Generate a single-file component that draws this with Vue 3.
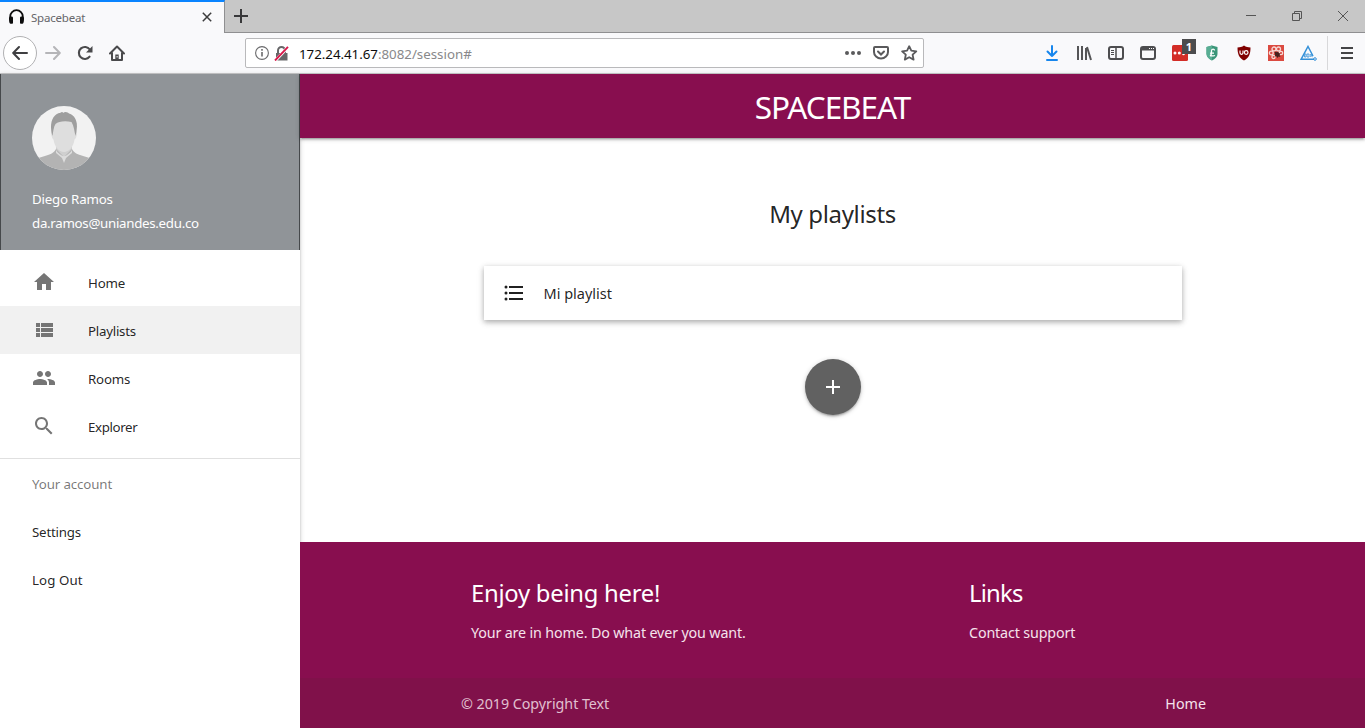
<script setup>
const nav = [
  { label: 'Home', cls: 'n-home', d: 'M10 20v-6h4v6h5v-8h3L12 3 2 12h3v8z' },
  { label: 'Playlists', cls: 'n-play', active: true, d: 'M4 14h4v-4H4v4zm0 5h4v-4H4v4zM4 9h4V5H4v4zm5 5h12v-4H9v4zm0 5h12v-4H9v4zM9 5v4h12V5H9z' },
  { label: 'Rooms', cls: 'n-rooms', d: 'M16 11c1.66 0 2.99-1.34 2.99-3S17.66 5 16 5c-1.66 0-3 1.34-3 3s1.34 3 3 3zm-8 0c1.66 0 2.99-1.34 2.99-3S9.66 5 8 5C6.34 5 5 6.34 5 8s1.34 3 3 3zm0 2c-2.33 0-7 1.17-7 3.5V19h14v-2.5c0-2.33-4.67-3.5-7-3.5zm8 0c-.29 0-.62.02-.97.05 1.16.84 1.97 1.97 1.97 3.45V19h6v-2.5c0-2.33-4.67-3.5-7-3.5z' },
  { label: 'Explorer', cls: 'n-exp', d: 'M15.5 14h-.79l-.28-.27C15.41 12.59 16 11.11 16 9.5 16 5.91 13.09 3 9.5 3S3 5.91 3 9.5 5.91 16 9.5 16c1.61 0 3.09-.59 4.23-1.57l.27.28v.79l5 4.99L20.49 19l-4.99-5zm-6 0C7.01 14 5 11.99 5 9.5S7.01 5 9.5 5 14 7.01 14 9.5 11.99 14 9.5 14z' },
]
</script>

<template>
  <div class="window">
    <div class="tabstrip">
      <div class="tab">
        <svg class="phones" width="17" height="16" viewBox="0 0 17 16"><path d="M2.2 9V7.5a6.3 6.3 0 0 1 12.6 0V9" fill="none" stroke="#0c0c0d" stroke-width="1.8" /><path d="M1 9c0-1.5 4-2.500 4 0v5c0 1-2.500 1-3 .5C1.200 13.500 1 12 1 9zM16 9c0-1.500-4-2.500-4 0v5c0 1 2.500 1 3 .5.800-1 1-2.500 1-5.500z" fill="#0c0c0d" /></svg>
        <span class="tab-title">Spacebeat</span>
        <svg class="tab-close" width="10" height="10" viewBox="0 0 10 10"><path d="M.8.8l8.400 8.400M9.200.8L.8 9.200" stroke="#3c3c3d" stroke-width="1.500" /></svg>
      </div>
      <svg class="plus" width="14" height="14" viewBox="0 0 14 14"><path d="M7 0v14M0 7h14" stroke="#38383a" stroke-width="2" /></svg>
      <div class="winbtns">
        <svg width="10" height="10" viewBox="0 0 10 10"><path d="M0 4.500h10" stroke="#555" /></svg>
        <svg width="10" height="10" viewBox="0 0 10 10" fill="none" stroke="#555"><path d="M.5 2.500h7v7h-7zM2.500 2.500v-2h7v7h-2" /></svg>
        <svg width="10" height="10" viewBox="0 0 10 10"><path d="M0 0l10 10M10 0L0 10" stroke="#555" /></svg>
      </div>
    </div>

    <div class="toolbar">
      <div class="back"><svg width="16" height="16" viewBox="0 0 16 16" fill="none" stroke="#3f3f41" stroke-width="2" stroke-linecap="round" stroke-linejoin="round"><path d="M15 8H1.500M7 2L1.200 8 7 14" /></svg></div>
      <svg class="fwd" width="16" height="16" viewBox="0 0 16 16" fill="none" stroke="#b5b5b8" stroke-width="2" stroke-linecap="round" stroke-linejoin="round"><path d="M1 8h13.500M9 2l5.800 6L9 14" /></svg>
      <svg class="reload" width="16" height="16" viewBox="0 0 16 16"><path d="M12.600 11.700A6 6 0 1 1 12.800 4.500" fill="none" stroke="#4a4a4c" stroke-width="2.100" stroke-linecap="round" /><path d="M15.500 1v6.500H9z" fill="#4a4a4c" /></svg>
      <svg class="homei" width="16" height="16" viewBox="0 0 16 16"><path d="M1 8.500L8 1.500l7 7M3 7.500V15h10V7.500" fill="none" stroke="#4a4a4c" stroke-width="2" stroke-linecap="round" stroke-linejoin="round" /><path d="M6.300 15V9.500h3.400V15z" fill="#4a4a4c" /><path d="M7.600 11h1v1.500h-1z" fill="#f9f9fa" /></svg>
      <div class="urlbar">
        <svg width="14" height="14" viewBox="0 0 14 14"><circle cx="7" cy="7" r="6.400" fill="none" stroke="#6a6a6c" stroke-width="1.100" /><path d="M7 6v4.500M7 3v1.700" stroke="#6a6a6c" stroke-width="1.600" /></svg>
        <svg class="lock" width="15" height="15" viewBox="0 0 15 15"><path d="M4 8V4.500a3.500 3.500 0 0 1 7 0V8" fill="none" stroke="#666668" stroke-width="2" /><path d="M2 7h11.500v7.500H2z" fill="#666668" /><path d="M1.500 14.500L14 1" stroke="#fff" stroke-width="3" /><path d="M1 14.500L14 .8" stroke="#d7184a" stroke-width="1.900" /></svg>
        <span class="url"><b>172.24.41.67</b>:8082/session#</span>
        <svg class="pageacts" width="74" height="18" viewBox="0 0 74 18" fill="none" stroke="#5a5a5c" stroke-width="2">
          <g fill="#5a5a5c" stroke="none"><circle cx="3" cy="9" r="2" /><circle cx="9" cy="9" r="2" /><circle cx="15" cy="9" r="2" /></g>
          <path d="M31 3h12a1 1 0 0 1 1 1v4a7 6.500 0 0 1-14 0V4a1 1 0 0 1 1-1z" /><path d="M34 7.500l3 3 3-3" stroke-linecap="round" />
          <path d="M65.200 2.200l2.100 4.500 5 .6-3.700 3.400 1 4.900-4.400-2.400-4.400 2.400 1-4.900-3.700-3.400 5-.6z" stroke-width="1.800" stroke-linejoin="round" />
        </svg>
      </div>
      <div class="actions">
        <svg width="16" height="18" viewBox="0 0 16 18" fill="none" stroke="#1786ed" stroke-width="2"><path d="M8 2v10M3.500 7.500L8 12l4.500-4.500M3 16h10" stroke-linecap="round" stroke-linejoin="round" /></svg>
        <svg width="16" height="16" viewBox="0 0 16 16" stroke="#555557" stroke-width="2"><path d="M2 1v14M6 1v14M10 3v12M11 2l4 13" /></svg>
        <svg width="16" height="14" viewBox="0 0 16 14" fill="none" stroke="#4d4d4f"><rect x="1" y="1" width="14" height="12" rx="2" stroke-width="2" /><path d="M8 1v12" stroke-width="1.500" /><path d="M3 4.500h3M3 6.500h3M3 8.500h3" /></svg>
        <svg width="16" height="14" viewBox="0 0 16 14" fill="none" stroke="#4d4d4f"><rect x="1" y="1" width="14" height="12" rx="2" stroke-width="2" /><path d="M1 3h14" stroke-width="3" /><path d="M9 2.500h1m1 0h1m1 0h1" stroke="#fff" /></svg>
        <div class="lp"><svg width="16" height="16" viewBox="0 0 16 16"><rect width="16" height="16" rx="1.500" fill="#d32d27" /><circle cx="3" cy="8" r="1.500" fill="#fff" /><circle cx="7.300" cy="8" r="1.500" fill="#fff" /><circle cx="11.500" cy="9" r="1.300" fill="#fff" /></svg><span class="count">1</span></div>
        <svg width="16" height="16" viewBox="0 0 16 16"><path d="M8 .5L13.500 2v7c0 3-2.500 5-5.500 6.500C5 14 2.500 12 2.500 9V2z" fill="#3b9679" /><path d="M8 .5V15.500C5 14 2.500 12 2.500 9V2z" fill="#58ad93" /><path d="M10.500 5.500c0-2-3-2-3 .5 0 2 .5 4-1.500 5 2-.8 3 .5 5-.5M6 8.200h4" fill="none" stroke="#fff" stroke-width="1.300" /></svg>
        <svg width="16" height="16" viewBox="0 0 16 16"><path d="M8 .5c2 1.500 4 1.800 6.500 2C14.500 9 13 13 8 15.500 3 13 1.500 9 1.500 2.500 4 2.300 6 2 8 .5z" fill="#800000" /><path d="M4 5.500v2.300a1.500 1.500 0 0 0 3 0V5.500" fill="none" stroke="#fff" stroke-width="1.200" /><circle cx="10.200" cy="7.500" r="1.800" fill="none" stroke="#fff" stroke-width="1.200" /></svg>
        <svg width="16" height="16" viewBox="0 0 16 16"><rect width="16" height="16" fill="#db4a40" /><g fill="none" stroke="#f6d9d5" stroke-width="1.300"><circle cx="6" cy="4" r="2" /><circle cx="10.500" cy="4" r="2" /><circle cx="13" cy="8" r="1.700" /><circle cx="3.300" cy="8" r="1.900" /><circle cx="5.500" cy="12" r="1.600" /></g><path d="M6.500 6.500l2.500.8 1-.8.8 1.600 1.700.4-1 1.500 1 2-2-.5-1 1.500-1-1.700-2 .3.700-1.600z" fill="#45201c" /></svg>
        <svg width="17" height="16" viewBox="0 0 17 16" fill="none" stroke="#3490d8"><path d="M14 14.200H1.200L8 1.500l5 9.500" stroke-width="1.500" /><circle cx="15" cy="14" r="1.300" /><path d="M4.500 12V9.500L6 8.800v3.200H4.500M7 9h2v3H7zM10 9l2.500 3.200M12 9l-2 3" stroke-width=".8" /></svg>
      </div>
      <div class="menu"><svg width="12" height="12" viewBox="0 0 12 12"><path d="M0 1h12M0 6h12M0 11h12" stroke="#454547" stroke-width="2" /></svg></div>
    </div>

    <div class="page">
      <aside class="side">
        <div class="user">
          <svg class="avatar" width="64" height="64" viewBox="0 0 64 64">
            <defs><clipPath id="face"><circle cx="32" cy="32" r="32" /></clipPath></defs>
            <g clip-path="url(#face)">
              <rect width="64" height="64" fill="#f2f2f2" />
              <path d="M24 40h16v10H24z" fill="#cfcfcf" />
              <path d="M0 55c5-3 11-4.500 16-6 4-1.200 6-2.500 8-6l8 8 8-8c2 3.500 4 4.800 8 6 5 1.500 11 3 16 6v9H0z" fill="#b3b3b3" />
              <path d="M24 44c2 3 5 5.500 8 6.500 3-1 6-3.500 8-6.500v3l-6 5-2 5-2-5-6-5z" fill="#dcdcdc" />
              <path d="M20 24c-2 1-.5 8 1.500 9.500C22.500 41 27 46 32 46s9.500-5 10.500-12.500C45 32 46 25 44 24 44 14 39 12 32 12s-12 2-12 12z" fill="#dedede" />
              <path d="M20.500 30C18 22 18.500 14 23 9.500c2-2 4-2.500 5-2.500 2-1.500 3-1 3 0 2-2 5-1 6 .5 4 1 7 4.500 7.800 10 .5 4-.3 8-1.300 12.500-1-4-1.500-10-4-14-7-1.500-13-.5-16 2-2 3-2.300 8-3 12z" fill="#9e9e9e" />
            </g>
          </svg>
          <span class="name">Diego Ramos</span>
          <span class="mail">da.ramos@uniandes.edu.co</span>
        </div>
        <ul class="nav">
          <li v-for="n in nav" :key="n.label" :class="{ active: n.active }">
            <svg width="24" height="24" viewBox="0 0 24 24"><path :d="n.d" fill="#757575" /></svg>
            <span :class="n.cls">{{ n.label }}</span>
          </li>
        </ul>
        <ul class="account">
          <li class="sub"><span>Your account</span></li>
          <li><span class="settings">Settings</span></li>
          <li><span class="logout">Log Out</span></li>
        </ul>
      </aside>

      <div class="main">
        <header class="brandbar"><span class="brand">SPACEBEAT</span></header>
        <main class="content">
          <h5 class="heading"><span>My playlists</span></h5>
          <div class="card">
            <svg width="24" height="24" viewBox="0 0 24 24" fill="#212121"><circle cx="4" cy="6" r="1.500" /><circle cx="4" cy="12" r="1.500" /><circle cx="4" cy="18" r="1.500" /><path d="M7 5h14v2H7zM7 11h14v2H7zM7 17h14v2H7z" /></svg>
            <span>Mi playlist</span>
          </div>
          <div class="fab"><svg width="24" height="24" viewBox="0 0 24 24"><path d="M19 13h-6v6h-2v-6H5v-2h6V5h2v6h6v2z" fill="#fff" /></svg></div>
        </main>
        <footer class="foot">
          <div class="foot-cols">
            <div class="col-a"><h5><span class="enjoy">Enjoy being here!</span></h5><p><span class="blurb">Your are in home. Do what ever you want.</span></p></div>
            <div class="col-b"><h5><span class="links">Links</span></h5><p><span class="support">Contact support</span></p></div>
          </div>
          <div class="copy"><span class="c">© 2019 Copyright Text</span><span class="h">Home</span></div>
        </footer>
      </div>
    </div>
  </div>
</template>

<style>
body { margin: 0; overflow: hidden; }
</style>

<style scoped>
* { box-sizing: border-box; }
svg { display: block; flex: none; }
span { white-space: nowrap; }
ul, h5, p { margin: 0; padding: 0; list-style: none; font-weight: 400; }
.window { width: 1365px; height: 728px; display: flex; flex-direction: column; background: #fff; font-family: "Noto Sans", "Open Sans", sans-serif; overflow: hidden; }

.tabstrip { height: 33px; display: flex; background: #c7c7c7; border-bottom: 1px solid #8f8f91; flex: none; }
.tab { width: 225px; height: 33px; background: #f9f9fb; border-top: 2px solid #0a84ff; border-right: 1px solid #8f8f91; display: flex; align-items: center; padding: 0 0 1px 8px; }
.tab-title { width: 171px; margin-left: 6px; font-size: 11.5px; letter-spacing: -0.2px; color: #66666a; }
.plus { margin: 9px 0 0 9px; }
.winbtns { margin: 11px 17px 0 auto; display: flex; gap: 36px; }

.toolbar { height: 41px; display: flex; align-items: center; background: #f9f9fb; border-bottom: 1px solid #c9c9cb; flex: none; }
.back { width: 34px; height: 34px; margin-left: 3px; border: 1px solid #b1b1b3; border-radius: 50%; background: #fff; display: flex; align-items: center; justify-content: center; }
.fwd { margin-left: 8px; }
.reload, .homei { margin-left: 16px; }
.urlbar { width: 679px; height: 30px; margin-left: 120px; padding: 0 5px 0 9px; border: 1px solid #b9b9bb; border-radius: 2px; background: #fff; display: flex; align-items: center; }
.lock { margin-left: 5px; }
.url { margin-left: 10px; padding-top: 1px; font-size: 13.3px; color: #88888a; }
.url b { font-weight: 400; letter-spacing: -0.02px; color: #0c0c0d; }
.pageacts { margin-left: auto; }
.actions { display: flex; align-items: center; gap: 16px; margin-left: 120px; }
.lp { position: relative; }
.count { position: absolute; left: 10px; top: -6px; width: 14px; height: 15px; background: #4c4c4e; color: #fff; font-size: 11px; line-height: 15px; font-weight: 700; text-align: center; }
.menu { height: 34px; margin-left: 10px; padding-left: 13px; border-left: 1px solid #d8d8da; display: flex; align-items: center; }

.page { flex: 1; display: flex; min-height: 0; }
.side { width: 300px; flex: none; background: #fff; box-shadow: 0 2px 2px rgba(0,0,0,.14), 0 3px 1px -2px rgba(0,0,0,.12), 0 1px 5px rgba(0,0,0,.2); font-size: 13.3px; letter-spacing: -0.2px; color: rgba(0,0,0,.87); }
.user { height: 176px; padding: 32px 31px 0; background: #909498; border-left: 1px solid #45484b; border-right: 1px solid #45484b; color: #fff; display: flex; flex-direction: column; }
.avatar { margin-bottom: 17px; }
.name, .mail { line-height: 24px; }
.mail { letter-spacing: -0.29px; }
.nav { padding: 8px 0; border-bottom: 1px solid #e0e0e0; }
.nav li { height: 48px; display: flex; align-items: center; padding-left: 32px; gap: 32px; }
.nav li span { padding-top: 2px; }
.n-play { letter-spacing: -0.25px; }
.n-exp { letter-spacing: -0.38px; }
.nav li.active { background: #f1f1f1; }
.account li { height: 48px; display: flex; align-items: center; padding-left: 32px; }
.account span { padding-top: 2px; }
.logout { letter-spacing: 0.1px; }
.sub { letter-spacing: -0.12px; color: rgba(0,0,0,.54); }

.main { flex: 1; display: flex; flex-direction: column; font-size: 14.3px; color: rgba(0,0,0,.87); }
.brandbar { height: 64px; background: #880e4f; color: #fff; display: flex; justify-content: center; align-items: center; font-size: 31.5px; letter-spacing: -1.05px; box-shadow: 0 2px 2px rgba(0,0,0,.14), 0 3px 1px -2px rgba(0,0,0,.12), 0 1px 5px rgba(0,0,0,.2); padding-top: 1px; }
.content { height: 404px; display: flex; flex-direction: column; align-items: center; }
.heading { font-size: 24px; letter-spacing: -0.35px; line-height: 30px; margin-top: 61px; }
.card { width: 698px; height: 54px; margin-top: 37px; padding-left: 18px; display: flex; align-items: center; gap: 18px; background: #fff; box-shadow: 0 2px 5px rgba(0,0,0,.25), 0 2px 8px rgba(0,0,0,.12); }
.card span { font-size: 14.5px; line-height: 20px; }
.fab { width: 56px; height: 56px; margin-top: 39px; border-radius: 50%; background: #616161; display: flex; align-items: center; justify-content: center; box-shadow: 0 2px 2px rgba(0,0,0,.14), 0 3px 1px -2px rgba(0,0,0,.12), 0 1px 5px rgba(0,0,0,.2); }
.foot { flex: 1; background: #880e4f; color: #fff; display: flex; flex-direction: column; }
.foot-cols { height: 136px; padding: 36px 0 0 171px; display: flex; }
.col-a { width: 498px; }
.foot h5 { font-size: 23.8px; letter-spacing: -0.25px; line-height: 30px; }
.foot h5 .links { letter-spacing: -0.75px; }
.foot p { margin-top: 14px; line-height: 22px; letter-spacing: -0.15px; color: #f5e3ec; }
.copy { flex: 1; padding: 1px 159px 0 161px; display: flex; align-items: center; justify-content: space-between; background: #80114a; color: #e0c0d0; }
.copy .c { letter-spacing: -0.04px; }
.copy .h { color: #f5e3ec; }
</style>
